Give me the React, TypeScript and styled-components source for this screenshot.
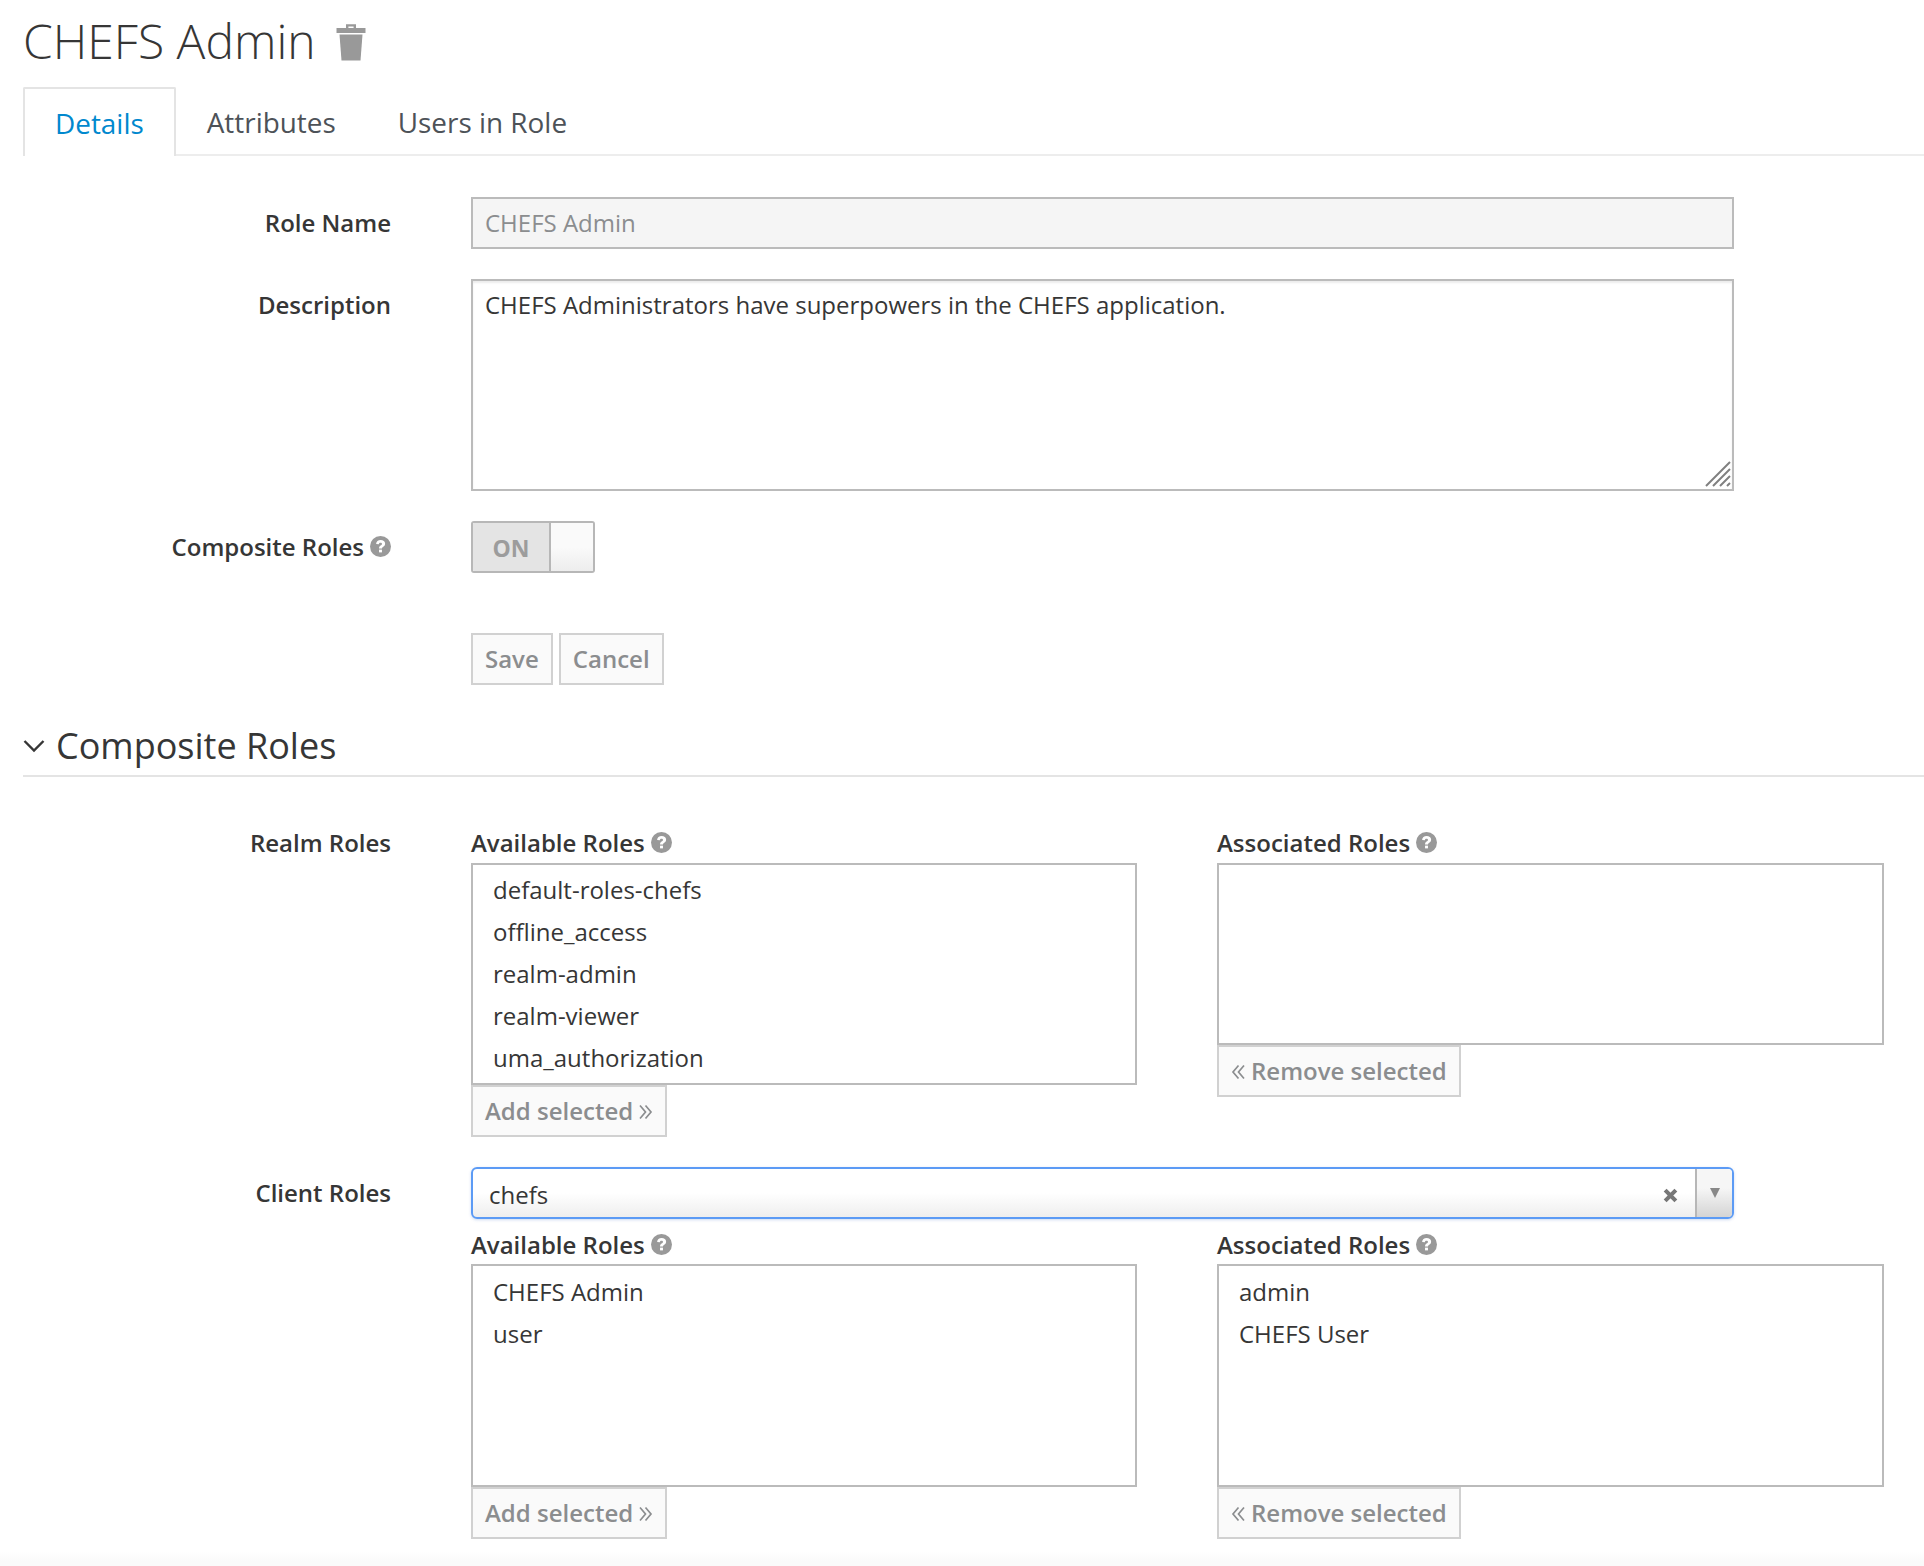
import React from "react";
import styled, { createGlobalStyle } from "styled-components";

const Global = createGlobalStyle`
  html, body { margin: 0; padding: 0; background: #fff; }
  body { font-family: "Open Sans", "Liberation Sans", sans-serif; color: #363636; }
`;

const Page = styled.div`
  width: 1924px;
  height: 1566px;
  padding-left: 23px;
  box-sizing: border-box;
  overflow: hidden;
  background: linear-gradient(#fff 1552px, #fafafa 1562px);
`;
const TitleRow = styled.div`
  display: flex;
  align-items: center;
  height: 87px;
  gap: 20px;
`;
const Title = styled.h1`
  margin: 0 0 6px;
  font-size: 48px;
  font-weight: 300;
  line-height: 80px;
  color: #363636;
`;
const TrashIcon = styled.svg`
  margin-bottom: 3px;
`;
const Tabs = styled.div`
  display: flex;
  height: 69px;
  box-sizing: border-box;
  border-bottom: 2px solid #ededed;
`;
const Tab = styled.div<{ $active?: boolean }>`
  box-sizing: border-box;
  height: ${(p) => (p.$active ? "69px" : "67px")};
  padding: 0 ${(p) => (p.$active ? "30px" : "31px")};
  font-size: 27.9px;
  line-height: ${(p) => (p.$active ? "68px" : "70px")};
  color: ${(p) => (p.$active ? "#0088ce" : "#4d5258")};
  background: #fff;
  ${(p) => p.$active && "border: 2px solid #e4e4e4; border-bottom: 0; border-radius: 2px 2px 0 0;"}
`;
const FormRow = styled.div<{ $top: number }>`
  display: grid;
  grid-template-columns: 368px 1263px;
  column-gap: 80px;
  margin-top: ${(p) => p.$top}px;
`;
const Label = styled.div<{ $h?: number }>`
  font-size: 24px;
  font-weight: 600;
  text-align: right;
  color: #363636;
  white-space: nowrap;
  display: flex;
  justify-content: flex-end;
  align-items: center;
  gap: 6px;
  height: ${(p) => p.$h ?? 51}px;
`;
const ReadInput = styled.div`
  box-sizing: border-box;
  height: 52px;
  padding: 0 12px;
  border: 2px solid #bbb;
  background: #f5f5f5;
  color: #8b8d8f;
  font-size: 24px;
  line-height: 48px;
`;
const TextBox = styled.div`
  position: relative;
  box-sizing: border-box;
  height: 212px;
  padding: 0 12px;
  border: 2px solid #bbb;
  box-shadow: inset 0 2px 2px rgba(3, 3, 3, 0.08);
  font-size: 24px;
  line-height: 48px;
  color: #363636;
`;
const Grip = styled.svg`
  position: absolute;
  right: 1px;
  bottom: 2px;
`;
const Toggle = styled.div`
  box-sizing: border-box;
  display: flex;
  width: 124px;
  height: 52px;
  border: 2px solid #b7b7b7;
  border-radius: 3px;
  overflow: hidden;
`;
const ToggleOn = styled.div`
  width: 76px;
  background: #e4e4e4;
  color: #9c9c9c;
  font-size: 23px;
  font-weight: 700;
  line-height: 50px;
  text-align: center;
`;
const ToggleKnob = styled.div`
  flex: 1;
  border-left: 2px solid #b7b7b7;
  background: linear-gradient(#fafafa 50%, #ededed);
`;
const Buttons = styled.div`
  display: flex;
  gap: 6px;
`;
const Btn = styled.div`
  box-sizing: border-box;
  display: flex;
  align-items: center;
  gap: 6px;
  height: 52px;
  padding: 0 12px 2px;
  border: 2px solid #d1d1d1;
  background: #fafafa;
  color: #8b8d8f;
  font-size: 24px;
  font-weight: 600;
  white-space: nowrap;
  width: fit-content;
`;
const SectionHead = styled.div`
  display: flex;
  align-items: center;
  gap: 11px;
  height: 63px;
  padding-top: 2px;
  margin-top: 29px;
  border-bottom: 2px solid #e4e4e4;
  box-sizing: border-box;
  font-size: 36px;
  color: #363636;
  line-height: 50px;
`;
const Split = styled.div`
  display: grid;
  grid-template-columns: 666px 667px;
  column-gap: 80px;
  width: 1413px;
`;
const ColHead = styled.div<{ $gap: number }>`
  display: flex;
  align-items: center;
  gap: 6px;
  height: 33px;
  margin-bottom: ${(p) => p.$gap}px;
  font-size: 24px;
  font-weight: 600;
  color: #363636;
  white-space: nowrap;
`;
const ListBox = styled.div<{ $h: number; $pad: number }>`
  box-sizing: border-box;
  height: ${(p) => p.$h}px;
  padding: ${(p) => p.$pad}px 20px 0;
  border: 2px solid #bbb;
  font-size: 24px;
  line-height: 42px;
  color: #363636;
  overflow: hidden;
`;
const Combo = styled.div`
  box-sizing: border-box;
  display: flex;
  align-items: stretch;
  height: 52px;
  border: 2px solid #5c9bf5;
  border-radius: 6px;
  background: linear-gradient(#fff 50%, #eee);
  box-shadow: 0 1px 3px rgba(60, 110, 200, 0.25);
  overflow: hidden;
`;
const ComboValue = styled.div`
  flex: 1;
  padding-left: 16px;
  font-size: 24px;
  line-height: 52px;
  color: #363636;
`;
const ComboClear = styled.div`
  display: flex;
  align-items: center;
  padding-right: 17px;
  padding-top: 5px;
`;
const ComboArrow = styled.div`
  display: flex;
  align-items: center;
  justify-content: center;
  width: 35px;
  border-left: 2px solid #b7b7b7;
  background: linear-gradient(#f6f6f6 40%, #d4d4d4);
`;
const AngleIcon = styled.svg`
  margin-top: 3px;
`;

const Help = () => (
  <svg width="21" height="21" viewBox="0 0 20 20" aria-hidden="true">
    <circle cx="10" cy="10" r="10" fill="#999" />
    <path d="M5.8 7.6c.2-2.4 1.9-3.7 4.3-3.7 2.5 0 4.3 1.3 4.3 3.4 0 1.5-.9 2.3-2 3.1-.7.5-1 .8-1 1.5H8.6c0-1.5.5-2.2 1.5-2.9.8-.6 1.3-.9 1.3-1.5s-.6-1-1.4-1c-.9 0-1.4.5-1.5 1.3z" fill="#fff" />
    <rect x="8.6" y="13" width="2.8" height="2.6" fill="#fff" />
  </svg>
);

const Trash = () => (
  <TrashIcon width="30" height="38" viewBox="0 0 30 38" aria-hidden="true">
    <path d="M10 5V1.2h10V5h-2.4V3.4h-5.2V5z" fill="#999" />
    <rect x="0.5" y="5" width="29" height="5" fill="#999" />
    <path d="M3.5 11.5h23L24.5 37.6h-19z" fill="#999" />
  </TrashIcon>
);

const Chevron = () => (
  <svg width="22" height="14" viewBox="0 0 22 14" aria-hidden="true">
    <path d="M1.5 2 11 11.5 20.5 2" fill="none" stroke="#363636" strokeWidth="2.4" />
  </svg>
);

const Angles = ({ left }: { left?: boolean }) => (
  <AngleIcon width="14" height="16" viewBox="0 0 14 16" aria-hidden="true">
    <path
      d={left ? "M7.5 1.5 2 8l5.5 6.5M13 1.5 7.5 8l5.5 6.5" : "M1 1.5 6.5 8 1 14.5M6.5 1.5 12 8l-5.5 6.5"}
      fill="none"
      stroke="#8b8d8f"
      strokeWidth="1.7"
    />
  </AngleIcon>
);

const RoleList = ({ h, pad, items }: { h: number; pad: number; items: string[] }) => (
  <ListBox $h={h} $pad={pad}>
    {items.map((i) => (
      <div key={i}>{i}</div>
    ))}
  </ListBox>
);

export default function App() {
  return (
    <Page>
      <Global />
      <TitleRow>
        <Title>CHEFS Admin</Title>
        <Trash />
      </TitleRow>
      <Tabs>
        <Tab $active>Details</Tab>
        <Tab>Attributes</Tab>
        <Tab>Users in Role</Tab>
      </Tabs>
      <FormRow $top={41}>
        <Label>Role Name</Label>
        <ReadInput>CHEFS Admin</ReadInput>
      </FormRow>
      <FormRow $top={30}>
        <Label>Description</Label>
        <TextBox>
          CHEFS Administrators have superpowers in the CHEFS application.
          <Grip width="26" height="26" viewBox="0 0 26 26" aria-hidden="true">
            <path d="M1 25 25 1M8 25 25 8M15 25 25 15M22 25l3-3" stroke="#808080" strokeWidth="2" fill="none" />
          </Grip>
        </TextBox>
      </FormRow>
      <FormRow $top={30}>
        <Label>
          Composite Roles <Help />
        </Label>
        <Toggle>
          <ToggleOn>ON</ToggleOn>
          <ToggleKnob />
        </Toggle>
      </FormRow>
      <FormRow $top={60}>
        <div />
        <Buttons>
          <Btn>Save</Btn>
          <Btn>Cancel</Btn>
        </Buttons>
      </FormRow>
      <SectionHead>
        <Chevron />
        Composite Roles
      </SectionHead>
      <FormRow $top={49}>
        <Label $h={33}>Realm Roles</Label>
        <Split>
          <div>
            <ColHead $gap={4}>
              Available Roles <Help />
            </ColHead>
            <RoleList
              h={222}
              pad={4}
              items={["default-roles-chefs", "offline_access", "realm-admin", "realm-viewer", "uma_authorization"]}
            />
            <Btn>
              Add selected <Angles />
            </Btn>
          </div>
          <div>
            <ColHead $gap={4}>
              Associated Roles <Help />
            </ColHead>
            <RoleList h={182} pad={4} items={[]} />
            <Btn>
              <Angles left /> Remove selected
            </Btn>
          </div>
        </Split>
      </FormRow>
      <FormRow $top={30}>
        <Label>Client Roles</Label>
        <Combo>
          <ComboValue>chefs</ComboValue>
          <ComboClear>
            <svg width="15" height="15" viewBox="0 0 14 14" aria-hidden="true">
              <path d="M2 2 12 12M12 2 2 12" stroke="#777" strokeWidth="3.8" />
            </svg>
          </ComboClear>
          <ComboArrow>
            <svg width="12" height="12" viewBox="0 0 12 12" aria-hidden="true">
              <path d="M1 1h10L6 11z" fill="#888" />
            </svg>
          </ComboArrow>
        </Combo>
      </FormRow>
      <FormRow $top={9}>
        <div />
        <Split>
          <div>
            <ColHead $gap={3}>
              Available Roles <Help />
            </ColHead>
            <RoleList h={223} pad={5} items={["CHEFS Admin", "user"]} />
            <Btn>
              Add selected <Angles />
            </Btn>
          </div>
          <div>
            <ColHead $gap={3}>
              Associated Roles <Help />
            </ColHead>
            <RoleList h={223} pad={5} items={["admin", "CHEFS User"]} />
            <Btn>
              <Angles left /> Remove selected
            </Btn>
          </div>
        </Split>
      </FormRow>
    </Page>
  );
}
